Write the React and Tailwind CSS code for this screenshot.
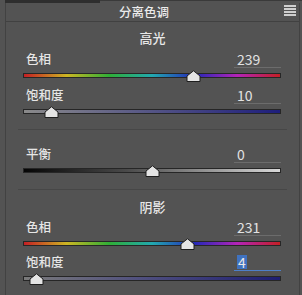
import React from 'react';

const HUE = 'linear-gradient(to right, #c41f24 0%, #cdb623 16.7%, #2fae36 33.3%, #22a9b0 50%, #2428b8 66.7%, #b424b8 83.3%, #c41f24 100%)';

function Thumb({ frac }) {
  return (
    <svg
      className="absolute top-[2px]"
      style={{ left: `${3 + 252 * frac - 7.5}px` }}
      width="15"
      height="12"
      viewBox="0 0 15 12"
    >
      <path d="M1 11.5 L1 6 L7.5 0.8 L14 6 L14 11.5 Z" fill="#e4e4e4" stroke="#1e1e1e" strokeWidth="1" strokeLinejoin="round" />
    </svg>
  );
}

function Slider({ label, value, frac, bar, focused = false, gap = 'mt-[8px]' }) {
  return (
    <div className={gap}>
      <div className="ml-[20px] w-[255px] h-[17px] flex justify-between items-center">
        <span className="text-[12.5px] leading-none font-medium text-[#e6e6e6]">{label}</span>
        <div className={`w-[47px] h-[17px] flex items-center pl-[3px] border-b ${focused ? 'border-[#4d7fc9]' : 'border-[#6c6c6c]'}`}>
          {focused ? (
            <span className="text-[14px] leading-[14px] px-[1px] bg-[#3f72c0] text-[#e8e8e8]">{value}</span>
          ) : (
            <span className="text-[14px] leading-none text-[#e2e2e2]">{value}</span>
          )}
        </div>
      </div>
      <div className="relative ml-[17px] w-[258px] h-[11px]">
        <div className="absolute left-0 right-0 top-[5px] h-[5px] border border-[#262626]" style={{ background: bar }} />
        <Thumb frac={frac} />
      </div>
    </div>
  );
}

function Title({ children, gap }) {
  return (
    <div className={`${gap} h-[14px] flex items-center justify-center text-[13px] font-medium text-[#e8e8e8]`}>
      {children}
    </div>
  );
}

export default function App() {
  return (
    <div className="w-[302px] h-[295px] bg-[#535353] overflow-hidden flex flex-col font-['Noto_Sans_CJK_SC','Liberation_Sans',sans-serif]">
      <div className="h-[3px] flex shrink-0">
        <div className="w-[5px]" />
        <div className="w-[95px] bg-[#2e2e2e]" />
        <div className="flex-1 border-t border-[#3a3a3a]" />
      </div>
      <div className="flex flex-1">
        <div className="w-[5px]" />
        <div className="w-[295px] border-l border-r border-[#424242] flex flex-col">
          <div className="h-[19px] flex items-center border-b border-[#414141] relative">
            <span className="pl-[113px] text-[12.5px] font-medium text-[#ebebeb]">分离色调</span>
            <svg className="absolute right-[3px] top-[2px]" width="12" height="11" viewBox="0 0 12 11">
              <rect x="0" y="0" width="12" height="2" fill="#cfcfcf" />
              <rect x="0" y="3" width="12" height="2" fill="#cfcfcf" />
              <rect x="0" y="6" width="12" height="2" fill="#cfcfcf" />
              <rect x="0" y="9" width="12" height="2" fill="#cfcfcf" />
            </svg>
          </div>

          <Title gap="mt-[9px]">高光</Title>
          <Slider label="色相" value="239" frac={239 / 360} bar={HUE} gap="mt-[6px]" />
          <Slider label="饱和度" value="10" frac={0.1} bar="linear-gradient(to right, #8a8a8a, #5a5a86 45%, #1e1e7c)" />

          <div className="mt-[14px] mx-[12px] border-t border-[#474747]" />
          <Slider label="平衡" value="0" frac={0.5} bar="linear-gradient(to right, #050505, #4a4a4a 40%, #d8d8d8)" gap="mt-[16px]" />
          <div className="mt-[15px] mx-[12px] border-t border-[#474747]" />

          <Title gap="mt-[10px]">阴影</Title>
          <Slider label="色相" value="231" frac={231 / 360} bar={HUE} gap="mt-[5px]" />
          <Slider label="饱和度" value="4" frac={0.04} bar="linear-gradient(to right, #7a7a7a, #50507e 45%, #1e1e72)" focused gap="mt-[7px]" />
        </div>
      </div>
    </div>
  );
}
